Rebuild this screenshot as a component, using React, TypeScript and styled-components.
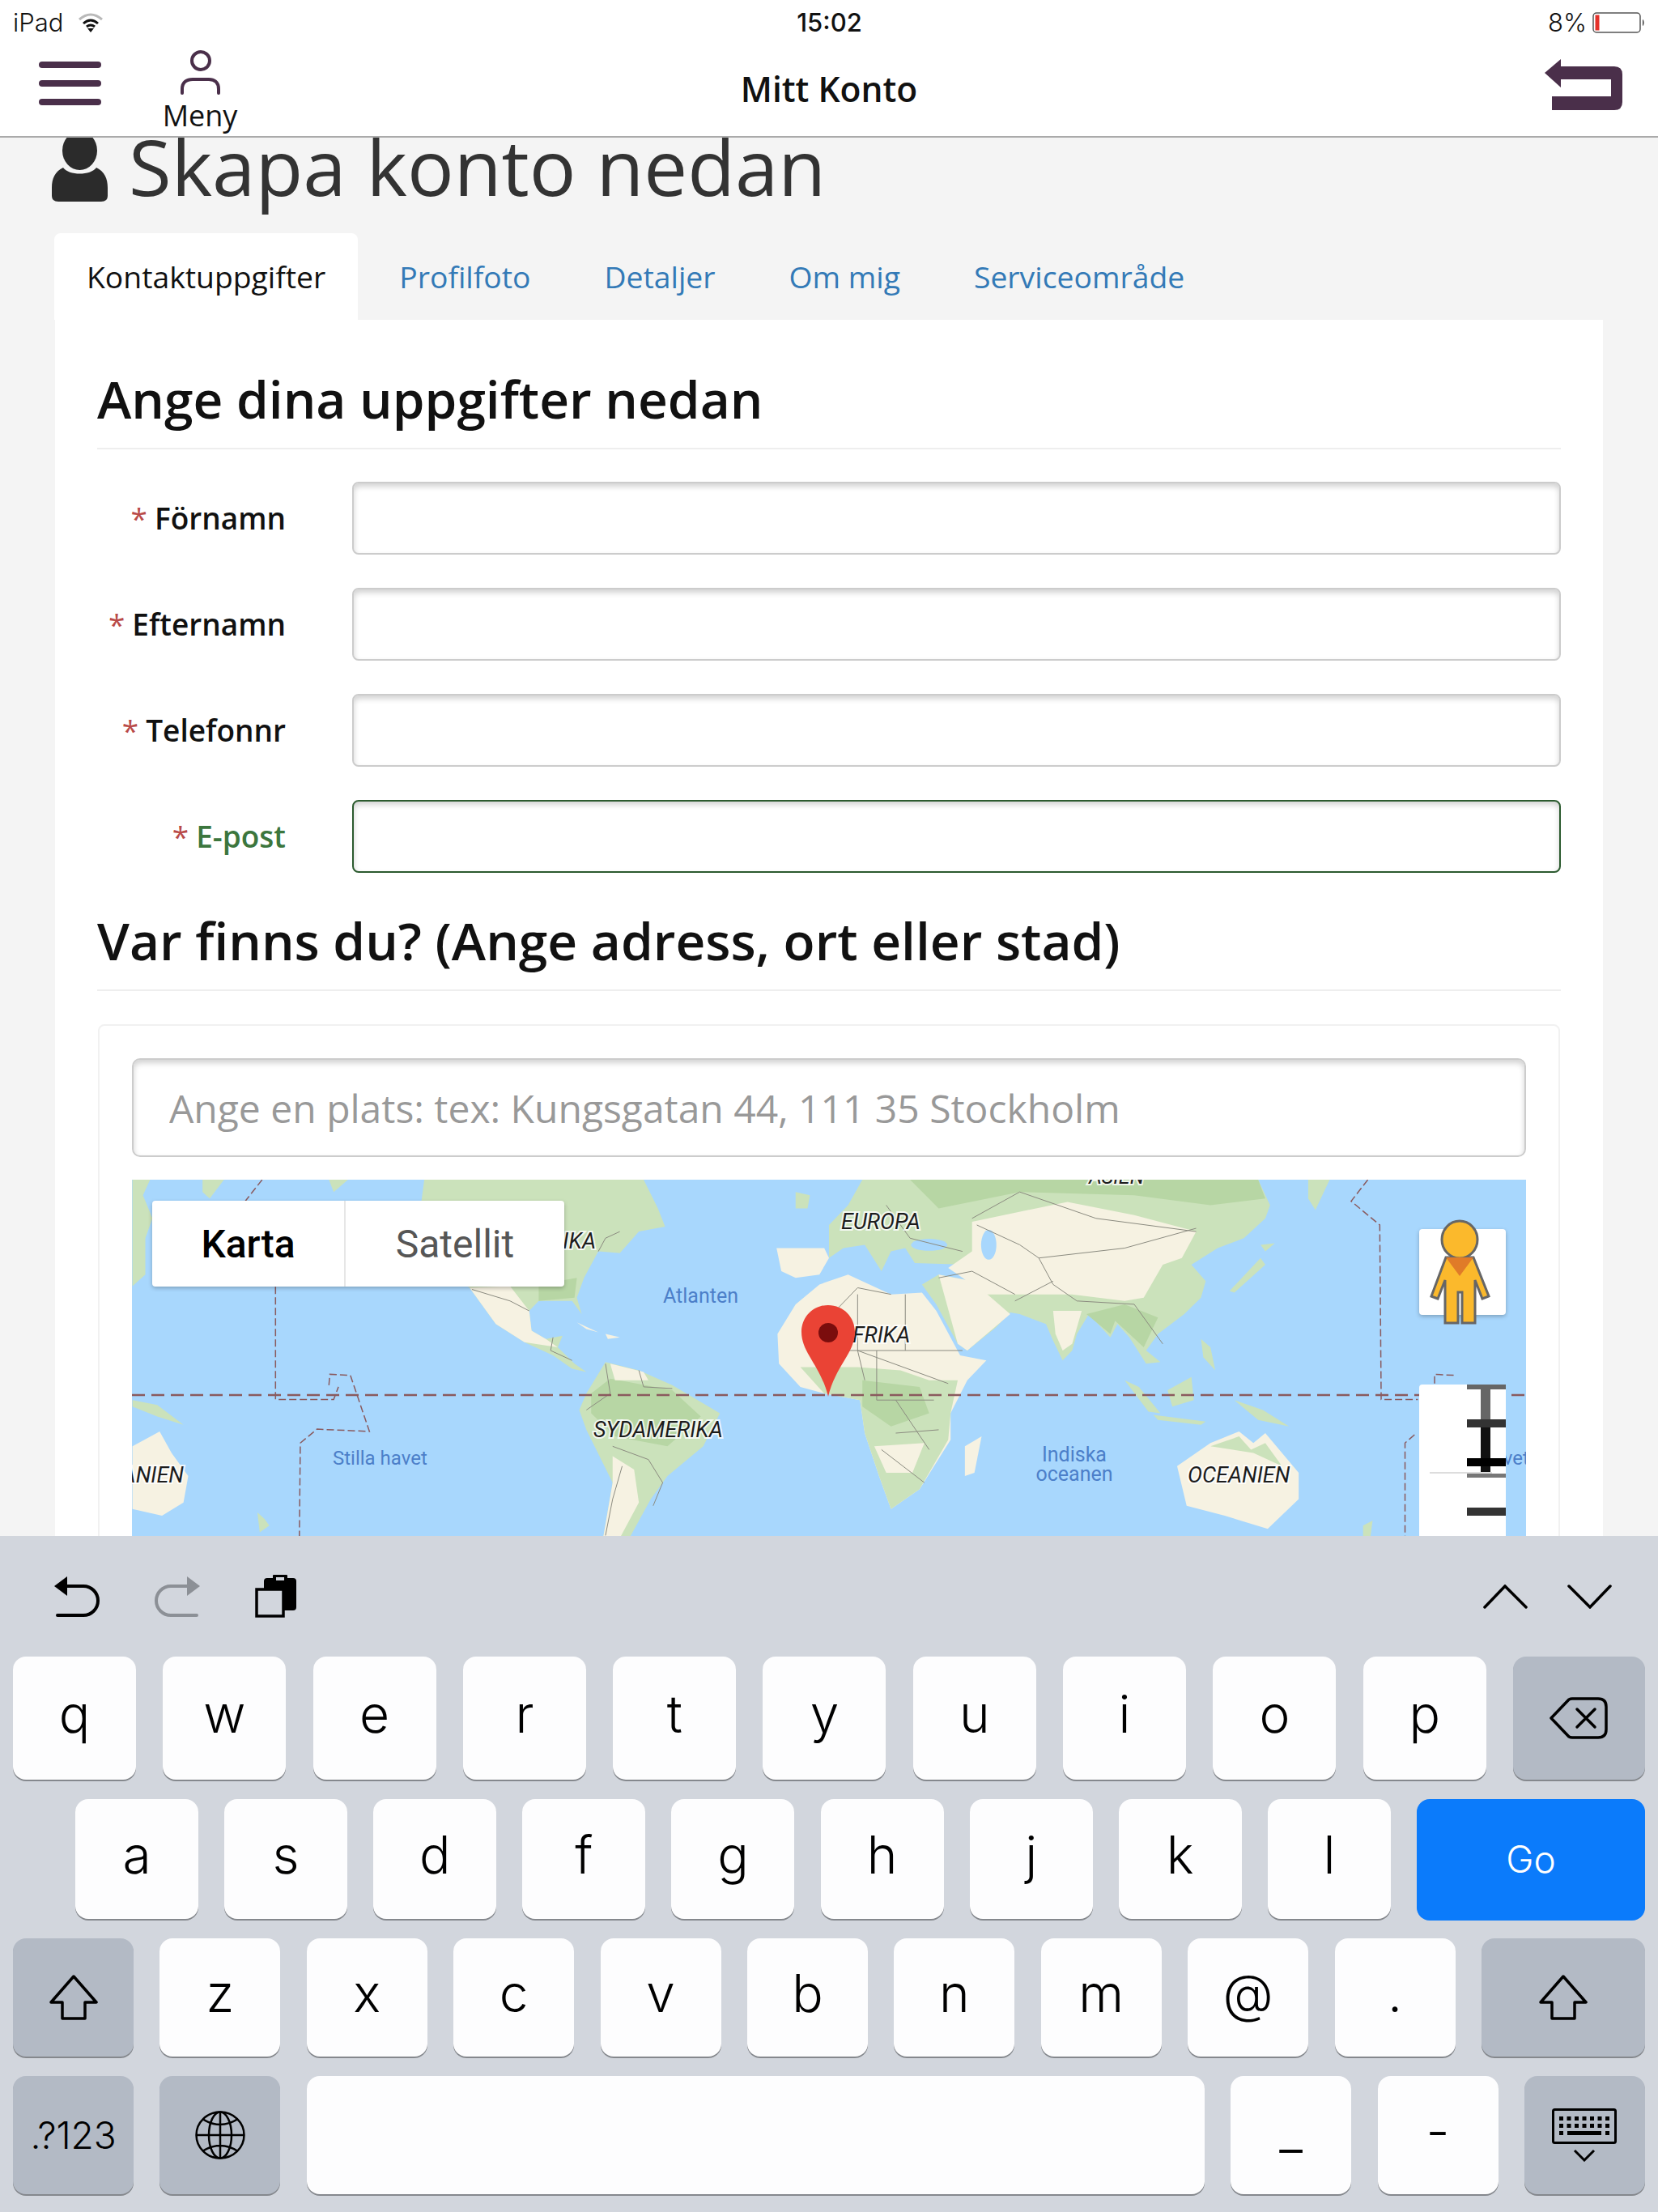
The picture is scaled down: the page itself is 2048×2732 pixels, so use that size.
import React from "react";
import styled, { createGlobalStyle } from "styled-components";

const plum = "#4a2f4a";
const kbBg = "#d2d6dd";

const GlobalStyle = createGlobalStyle`
    html, body {
        margin: 0;
        padding: 0;
        background: #fff;
    }
    * {
        box-sizing: border-box;
    }
`;

const Page = styled.div`
    width: 2048px;
    height: 2732px;
    display: flex;
    flex-direction: column;
    overflow: hidden;
    font-family: "Open Sans", sans-serif;
    background: #f4f4f4;
`;

const StatusBar = styled.div`
    height: 55px;
    background: #fff;
    display: grid;
    grid-template-columns: 1fr auto 1fr;
    align-items: center;
    padding: 0 15px 0 16px;
    font-family: Inter, sans-serif;
    font-size: 31px;
    font-weight: 300;
    color: #111;
`;

const StatusLeft = styled.div`
    display: flex;
    align-items: center;
    gap: 18px;
`;

const StatusRight = styled.div`
    display: flex;
    align-items: center;
    justify-content: flex-end;
    gap: 7px;
`;

const Clock = styled.div`
    font-weight: 500;
    font-size: 31px;
`;

const Nav = styled.div`
    height: 115px;
    background: #fff;
    border-bottom: 2px solid #aaa;
    display: grid;
    grid-template-columns: 1fr auto 1fr;
`;

const NavLeft = styled.div`
    display: flex;
    padding-left: 48px;
    gap: 76px;
`;

const Burger = styled.div`
    width: 77px;
    margin-top: 21px;
    display: flex;
    flex-direction: column;
    gap: 15px;
`;

const BurgerBar = styled.span`
    height: 8px;
    border-radius: 4px;
    background: ${plum};
`;

const MenuButton = styled.div`
    width: 92px;
    padding-top: 7px;
    display: flex;
    flex-direction: column;
    align-items: center;
`;

const MenuLabel = styled.div`
    font-size: 36px;
    line-height: 36px;
    margin-top: 8px;
    color: #111;
`;

const NavTitle = styled.div`
    font-size: 42.5px;
    font-weight: 600;
    line-height: 110px;
    color: #111;
`;

const NavRight = styled.div`
    display: flex;
    justify-content: flex-end;
    padding: 18px 44px 0 0;
`;

const Content = styled.div`
    flex: 1;
    min-height: 0;
    overflow: hidden;
    padding: 0 68px;
`;

const PageTitle = styled.h1`
    margin: -3px 0 38px -4px;
    display: flex;
    gap: 26px;
    font-size: 96px;
    line-height: 76px;
    font-weight: 400;
    color: #333;
`;

const TitleIcon = styled.svg`
    flex: none;
    margin-top: 3px;
`;

const Tabs = styled.div`
    display: flex;
    height: 107px;
    margin-left: -1px;
    gap: 11px;
`;

const Tab = styled.div<{ $active?: boolean }>`
    padding: 0 40px;
    font-size: 37.3px;
    line-height: 107px;
    border-radius: 8px 8px 0 0;
    color: ${(p) => (p.$active ? "#111" : "#337ab7")};
    background: ${(p) => (p.$active ? "#fff" : "transparent")};
`;

const Panel = styled.div`
    background: #fff;
    padding: 68px 52px 0;
`;

const SectionTitle = styled.h2<{ $top?: number }>`
    margin: ${(p) => p.$top ?? 0}px 0 0;
    padding-bottom: 30px;
    border-bottom: 2px solid #eee;
    font-size: 64px;
    line-height: 60px;
    font-weight: 600;
    color: #111;
`;

const Fields = styled.div`
    margin-top: 40px;
    display: flex;
    flex-direction: column;
    gap: 41px;
`;

const Field = styled.div`
    display: flex;
    align-items: center;
    gap: 82px;
`;

const FieldLabel = styled.label<{ $ok?: boolean }>`
    width: 233px;
    flex: none;
    padding-bottom: 2px;
    text-align: right;
    font-size: 37px;
    font-weight: 600;
    color: ${(p) => (p.$ok ? "#3c763d" : "#111")};
`;

const Required = styled.span`
    color: #b94a48;
    font-weight: 400;
    margin-right: 9px;
`;

const TextInput = styled.input<{ $ok?: boolean }>`
    flex: 1;
    min-width: 0;
    height: 90px;
    border: 2px solid ${(p) => (p.$ok ? "#2b5a2e" : "#ccc")};
    border-radius: 8px;
    background: #fff;
    box-shadow: inset 0 4px 7px rgba(0, 0, 0, 0.18);
    outline: none;
`;

const MapCard = styled.div`
    margin: 41px 1px 0;
    padding: 40px 40px 0;
    height: 900px;
    border: 2px solid #f1f1f1;
    border-radius: 8px;
`;

const SearchInput = styled.input`
    display: block;
    width: 100%;
    height: 122px;
    padding: 0 44px;
    border: 2px solid #ccc;
    border-radius: 10px;
    box-shadow: inset 0 4px 7px rgba(0, 0, 0, 0.18);
    font-family: "Open Sans", sans-serif;
    font-size: 48px;
    outline: none;
    &::placeholder {
        color: #999;
        opacity: 1;
    }
`;

const MapBox = styled.div`
    position: relative;
    margin-top: 28px;
    height: 441px;
    background: #a8d7fd;
    overflow: hidden;
`;

const MapSvg = styled.svg`
    display: block;
    polyline,
    path {
        vector-effect: non-scaling-stroke;
    }
`;

const MapLabel = styled.text<{ $water?: boolean; $size?: number }>`
    font-family: Roboto, sans-serif;
    font-size: ${(p) => p.$size ?? 27}px;
    font-style: ${(p) => (p.$water ? "normal" : "italic")};
    fill: ${(p) => (p.$water ? "#4c7fc9" : "#1c1c1c")};
    paint-order: stroke;
    stroke: ${(p) => (p.$water ? "none" : "rgba(255,255,255,0.8)")};
    stroke-width: 4px;
`;

const MapType = styled.div`
    position: absolute;
    left: 25px;
    top: 26px;
    width: 509px;
    height: 106px;
    display: flex;
    background: #fff;
    border-radius: 4px;
    box-shadow: 0 2px 5px rgba(0, 0, 0, 0.25);
    font-family: Roboto, sans-serif;
    font-size: 48px;
`;

const MapTypeItem = styled.div<{ $active?: boolean }>`
    flex: ${(p) => (p.$active ? "0 0 239px" : "1")};
    display: flex;
    align-items: center;
    justify-content: center;
    font-weight: ${(p) => (p.$active ? 500 : 400)};
    color: ${(p) => (p.$active ? "#000" : "#565656")};
    border-right: ${(p) => (p.$active ? "2px solid #e6e6e6" : "none")};
`;

const PegmanBox = styled.div`
    position: absolute;
    right: 25px;
    top: 61px;
    width: 107px;
    height: 106px;
    background: #fff;
    border-radius: 4px;
    box-shadow: 0 2px 5px rgba(0, 0, 0, 0.25);
`;

const PegmanIcon = styled.svg`
    position: absolute;
    left: 13px;
    top: -12px;
`;

const ZoomBox = styled.div`
    position: absolute;
    right: 25px;
    top: 253px;
    width: 107px;
    height: 188px;
    background: #fff;
    border-radius: 4px 4px 0 0;
`;

const Pin = styled.svg`
    position: absolute;
    left: 825px;
    top: 154px;
`;

const Keyboard = styled.div`
    flex: none;
    height: 835px;
    background: ${kbBg};
    display: flex;
    flex-direction: column;
    gap: 22px;
    font-family: Inter, sans-serif;
    font-weight: 300;
    color: #000;
`;

const KbToolbar = styled.div`
    height: 127px;
    flex: none;
    display: flex;
    align-items: center;
    justify-content: space-between;
    padding: 22px 57px 0 67px;
`;

const ToolGroup = styled.div<{ $gap: number }>`
    display: flex;
    align-items: center;
    gap: ${(p) => p.$gap}px;
`;

const KeyRow = styled.div<{ $height: number; $left?: number }>`
    height: ${(p) => p.$height}px;
    flex: none;
    display: flex;
    justify-content: space-between;
    padding: 0 16px 0 ${(p) => p.$left ?? 16}px;
`;

const Key = styled.div<{ $w: number; $kind?: "dark" | "go"; $size?: number }>`
    width: ${(p) => p.$w}px;
    height: calc(100% - 2px);
    flex: none;
    display: flex;
    align-items: center;
    justify-content: center;
    padding-bottom: 10px;
    border-radius: 16px;
    font-size: ${(p) => p.$size ?? 64}px;
    line-height: 1;
    color: ${(p) => (p.$kind === "go" ? "#fff" : "#000")};
    background: ${(p) =>
        p.$kind === "dark" ? "#b3bac5" : p.$kind === "go" ? "#0b7bfb" : "#fdfdfe"};
    box-shadow: 0 2px 0 ${(p) => (p.$kind === "go" ? "#0b7bfb" : "#85888d")};
`;

const IconKey = styled(Key)`
    padding-bottom: 0;
`;

const WifiIcon = () => (
    <svg width="32" height="24" viewBox="0 0 32 24" fill="none" strokeWidth="3">
        <path d="M2 8Q16 -4 30 8" stroke="#b9b9b9" />
        <path d="M7 13Q16 5 25 13" stroke="#111" />
        <path d="M11 17Q16 13 21 17" stroke="#111" />
        <path d="M12 19H20L16 24Z" fill="#111" />
    </svg>
);

const BatteryIcon = () => (
    <svg width="66" height="26" viewBox="0 0 66 26">
        <rect x="1" y="1" width="58" height="24" rx="4" fill="#fff" stroke="#555" strokeWidth="1.5" />
        <rect x="3.5" y="3.5" width="5" height="19" fill="#e5312a" />
        <path d="M62 9C64 10 64 16 62 17Z" fill="#333" />
    </svg>
);

const PersonIcon = () => (
    <svg width="51" height="55" viewBox="0 0 51 55" fill="none" stroke={plum} strokeWidth="4" strokeLinecap="round">
        <circle cx="26" cy="13" r="11" />
        <path d="M3 53V48C3 39 9 36 16 36H36C42 36 48 39 48 48V53" />
    </svg>
);

const BackIcon = () => (
    <svg width="96" height="64" viewBox="0 0 96 64">
        <path
            fill={plum}
            d="M20 0L0 17L20 35V25H82V46H9V63H86Q96 63 96 53V19Q96 9 86 9H20Z"
        />
    </svg>
);

const UserGlyph = () => (
    <TitleIcon width="69" height="80" viewBox="0 0 69 80" fill="#2b2b2b">
        <ellipse cx="34.5" cy="16" rx="21.5" ry="24" />
        <path d="M14 37C4 42 0 50 0 62V72Q0 79 8 79H61Q69 79 69 72V62C69 50 65 42 55 37C48 47 21 47 14 37Z" />
    </TitleIcon>
);

const land = "#f6f2e2";
const green = "#cbe2bb";
const forest = "#b7d6a4";
const borderColor = "#8b8b80";
const dashColor = "#8a5a5e";

const WorldMap = () => (
    <MapSvg width="1722" height="441" viewBox="163 1457 1722 441">
        <g transform="translate(100 1260) scale(0.589 0.408)">
            <g fill={green}>
                <path d="M108 483H145L130 530L150 600L135 660L135 770L108 805Z" />
                <path d="M255 483H300L270 540L255 520Z" />
                <path d="M520 483H560L530 520Z" />
                <path d="M720 483L1180 483L1210 570L1225 625L1170 640L1130 705L1085 700L1055 780L1040 840L1050 890L1030 850L960 850L940 880L945 940L975 965L1010 955L1000 990L1035 1040L1060 1065L1030 1055L990 1015L930 975L870 920L815 810L700 700Z" />
                <path d="M1060 1130L1100 1035L1170 1060L1240 1105L1340 1190L1305 1290L1230 1380L1195 1450L1150 1568H1095L1115 1400L1060 1240L1045 1180Z" />
                <path d="M108 1150L160 1165L215 1225L160 1200L108 1170Z" />
                <path d="M370 1490L385 1510L395 1530L375 1550Z" />
            </g>
            <g fill={forest}>
                <path d="M960 800L1040 780L1035 840L960 850Z" />
                <path d="M1070 1130L1110 1085L1240 1120L1300 1200L1230 1290L1120 1260L1070 1190Z" />
            </g>
            <g fill={land}>
                <path d="M815 810L900 805L940 880L945 940L975 965L1000 990L930 975L870 920Z" />
                <path d="M1115 1320L1160 1360L1170 1460L1130 1568H1095L1115 1400Z" />
                <path d="M1110 1040L1180 1065L1190 1090L1120 1090Z" />
                <path d="M108 1290L165 1245L190 1310L225 1380L215 1460L170 1500L108 1480Z" />
                <path d="M1040 915L1085 945L1060 935Z" />
                <path d="M1100 950L1130 960L1105 965Z" />
            </g>
            <g fill="none" stroke={borderColor} strokeWidth="1">
                <polyline points="820,815 900,850 940,880" />
                <polyline points="990,960 985,1000 1030,1030" />
                <polyline points="1100,1040 1110,1130 1060,1180" />
                <polyline points="1170,1060 1180,1110 1240,1115" />
                <polyline points="1115,1290 1190,1330 1220,1400 1200,1470" />
                <polyline points="1135,1350 1115,1450 1100,1560" />
                <polyline points="1130,640 1100,660 1085,700" />
            </g>
            <g fill="none" stroke={dashColor} strokeWidth="1.5" strokeDasharray="9 4">
                <polyline points="380,483 345,547" />
                <polyline points="408,807 408,1148 530,1148 540,1110" />
                <polyline points="520,1105 522,1072 565,1075 605,1245 495,1238 460,1280 458,1568" />
            </g>
        </g>
        <g transform="translate(1024 1260) scale(0.589 0.408)">
            <g fill={green}>
                <path d="M70 483H900L925 560L915 600L870 660L815 690L760 740L790 790L780 840L745 890L690 950L665 1000L695 1035L665 1040L630 960L605 920L590 960L545 890L520 950L510 1000L490 1030L470 970L455 920L400 890L380 885L350 930L290 1000L270 980L225 860L195 800L230 770L300 790L290 740L180 735L160 690L130 700L110 760L75 680L30 690L0 720V620L40 560Z" />
                <path d="M1005 483H1050L1020 575L1005 540Z" />
                <path d="M-70 520L-40 530L-45 570L-70 570Z" />
                <path d="M840 820L905 720L915 740L850 825Z" />
                <path d="M905 680L935 675L915 700Z" />
                <path d="M620 1090L650 1110L695 1190L670 1185Z" />
                <path d="M710 1120L760 1080L765 1150L720 1170Z" />
                <path d="M680 1195L790 1215L780 1225L690 1210Z" />
                <path d="M780 965L800 990L810 1060L785 1020Z" />
                <path d="M850 1150L910 1180L965 1230L900 1210Z" />
                <path d="M1120 1530L1140 1515L1135 1568H1120Z" />
            </g>
            <g fill={forest}>
                <path d="M170 483H900L915 540L800 560L640 530L400 520L230 570Z" />
                <path d="M540 890L620 860L690 900L660 990L630 950L600 910L590 950Z" />
            </g>
            <g fill={land}>
                <path d="M300 610L500 550L640 590L770 640L740 720L700 740L660 840L620 850L510 830L420 830L330 830L250 750L300 700Z" />
                <path d="M230 770L300 790L380 890L290 1000L270 980Z" />
                <path d="M470 880L530 880L510 980L490 1000L475 950Z" />
                <path d="M-110 690H-10L0 720L-20 770L-70 780L-100 760Z" />
                <path d="M-108 950L-70 860L-20 800L40 770L130 830L195 825L225 880L275 1015L330 1030L290 1090L255 1190L255 1270L190 1420L130 1480L105 1380L75 1250L65 1150L-10 1130L-60 1110L-105 1040Z" />
                <path d="M285 1290L320 1260L305 1370L285 1380Z" />
                <path d="M730 1350L800 1280L860 1245L890 1280L915 1250L985 1370L985 1450L920 1540L830 1500L750 1470Z" />
            </g>
            <g fill={green}>
                <path d="M-60 1050L60 1050L150 1060L210 1090L270 1090L255 1190L250 1270L190 1420L130 1480L105 1380L75 1250L65 1150L-10 1130Z" />
                <path d="M800 1290L860 1260L885 1300L915 1280L950 1350L890 1310Z" />
            </g>
            <g fill={land}>
                <path d="M95 1290L200 1280L175 1370L120 1370Z" />
            </g>
            <g fill={forest}>
                <path d="M70 1090L190 1110L210 1190L130 1230L70 1170Z" />
            </g>
            <g fill="#a8d7fd">
                <ellipse cx="335" cy="680" rx="16" ry="45" />
                <ellipse cx="210" cy="680" rx="38" ry="18" />
            </g>
            <g fill="none" stroke={borderColor} strokeWidth="1">
                <polyline points="0,900 60,810 130,830" />
                <polyline points="60,830 60,1000" />
                <polyline points="160,830 160,1000" />
                <polyline points="-30,1000 280,1000" />
                <polyline points="100,1000 100,1150 130,1150 220,1150" />
                <polyline points="140,1250 230,1240" />
                <polyline points="110,1300 200,1400" />
                <polyline points="300,600 400,520 560,600 770,640" />
                <polyline points="440,720 620,690 770,630" />
                <polyline points="310,620 400,680 440,720 470,800 520,850 640,860 700,980" />
                <polyline points="390,850 470,790" />
                <polyline points="230,780 300,760 390,830" />
                <polyline points="120,560 170,660 280,700" />
                <polyline points="75,1090 60,1000 250,1100" />
                <polyline points="140,1150 210,1300" />
            </g>
            <g fill="none" stroke={dashColor} strokeWidth="1.5" strokeDasharray="9 4">
                <polyline points="1130,483 1095,548 1155,620 1158,1148 1235,1148" />
                <polyline points="1270,1100 1270,1072 1310,1075" />
                <polyline points="1228,1255 1208,1280 1208,1568" />
            </g>
        </g>
        <polyline
            points="163,1723 1885,1723"
            fill="none"
            stroke={dashColor}
            strokeWidth="2.5"
            strokeDasharray="16 8"
        />
        <MapLabel x="1379" y="1462" textAnchor="middle" $size={25}>ASIEN</MapLabel>
        <MapLabel x="1039" y="1518">EUROPA</MapLabel>
        <MapLabel x="1036" y="1658">AFRIKA</MapLabel>
        <MapLabel x="736" y="1542" textAnchor="end">NORDAMERIKA</MapLabel>
        <MapLabel x="733" y="1775">SYDAMERIKA</MapLabel>
        <MapLabel x="227" y="1831" textAnchor="end">OCEANIEN</MapLabel>
        <MapLabel x="1467" y="1831">OCEANIEN</MapLabel>
        <MapLabel x="819" y="1609" $water $size={25}>Atlanten</MapLabel>
        <MapLabel x="411" y="1809" $water $size={24}>Stilla havet</MapLabel>
        <MapLabel x="1772" y="1809" $water $size={24}>Stilla havet</MapLabel>
        <MapLabel x="1327" y="1805" textAnchor="middle" $water $size={25}>Indiska</MapLabel>
        <MapLabel x="1327" y="1829" textAnchor="middle" $water $size={25}>oceanen</MapLabel>
    </MapSvg>
);

const PinIcon = () => (
    <Pin width="70" height="116" viewBox="0 0 70 116">
        <path
            fill="#ea4335"
            d="M35 1C16 1 2 16 2 34C2 60 26 76 35 114C44 76 68 60 68 34C68 16 54 1 35 1Z"
        />
        <circle cx="35" cy="35" r="12" fill="#7b0d0d" />
    </Pin>
);

const PegmanGlyph = () => (
    <PegmanIcon width="75" height="131" viewBox="0 0 75 131">
        <path
            fill="#fbb92c"
            stroke="#666"
            strokeWidth="3"
            d="M20 47H54L73 95L65 98L56 75V128H40V90H35V128H19V75L10 98L2 95Z"
        />
        <ellipse cx="37" cy="25" rx="22" ry="23" fill="#fbb92c" stroke="#666" strokeWidth="3" />
        <path fill="#e07b28" d="M20 47H54L37 70Z" />
    </PegmanIcon>
);

const ZoomGlyph = () => (
    <svg width="107" height="188" viewBox="0 0 107 188">
        <rect x="59" y="0" width="48" height="6" fill="#666" />
        <rect x="76" y="6" width="12" height="40" fill="#666" />
        <rect x="76" y="43" width="12" height="48" fill="#333" />
        <rect x="59" y="43" width="48" height="10" fill="#333" />
        <rect x="76" y="53" width="12" height="57" fill="#111" />
        <rect x="59" y="91" width="48" height="10" fill="#000" />
        <rect x="13" y="108" width="77" height="2" fill="#ddd" />
        <rect x="59" y="110" width="48" height="5" fill="#777" />
        <rect x="59" y="152" width="48" height="10" fill="#333" />
    </svg>
);

const UndoIcon = ({ color, flip }: { color: string; flip?: boolean }) => (
    <svg width="56" height="51" viewBox="0 0 56 51" fill="none">
        <g transform={flip ? "translate(56 0) scale(-1 1)" : undefined}>
            <path d="M0 13L16 1V25Z" fill={color} />
            <path d="M14 13H36A18 18 0 0 1 36 49H4" stroke={color} strokeWidth="4" strokeLinecap="round" />
        </g>
    </svg>
);

const ClipboardIcon = () => (
    <svg width="51" height="53" viewBox="0 0 51 53">
        <rect x="11" y="4" width="40" height="40" rx="4" fill="#000" />
        <rect x="22" y="0" width="18" height="9" rx="1" fill="#000" />
        <rect x="26" y="3" width="10" height="4" fill={kbBg} />
        <rect x="2" y="18" width="33" height="33" fill={kbBg} stroke="#000" strokeWidth="3.5" />
    </svg>
);

const ChevronIcon = ({ up }: { up?: boolean }) => (
    <svg width="55" height="30" viewBox="0 0 55 30" fill="none" stroke="#000" strokeWidth="3.5" strokeLinecap="round">
        <polyline points={up ? "2,28 27,2 53,28" : "2,2 28,28 53,2"} />
    </svg>
);

const BackspaceIcon = () => (
    <svg width="72" height="52" viewBox="0 0 72 52" fill="none" stroke="#000" strokeWidth="3.5" strokeLinecap="round" strokeLinejoin="round">
        <path d="M2 26L24 3Q26 2 28 2H60Q70 2 70 12V40Q70 50 60 50H28Q26 50 24 49Z" />
        <path d="M34 15L56 37M56 15L34 37" />
    </svg>
);

const ShiftIcon = () => (
    <svg width="60" height="56" viewBox="0 0 60 56" fill="none" stroke="#000" strokeWidth="3.5" strokeLinejoin="round">
        <path d="M30 2L58 34H44V54H16V34H2Z" />
    </svg>
);

const GlobeIcon = () => (
    <svg width="62" height="60" viewBox="0 0 62 60" fill="none" stroke="#000" strokeWidth="2.5">
        <ellipse cx="31" cy="30" rx="29.5" ry="28.5" />
        <ellipse cx="31" cy="30" rx="14" ry="28.5" />
        <path d="M31 1V59M2 30H60M9 10Q31 24 53 10M9 50Q31 36 53 50" />
    </svg>
);

const KeyboardIcon = () => {
    const dots: React.ReactElement[] = [];
    [0, 1].forEach((row) => {
        for (let i = 0; i < 7; i++) {
            dots.push(<rect key={`${row}-${i}`} x={9 + i * 9.5} y={10 + row * 9} width="5" height="5" />);
        }
    });
    return (
        <svg width="80" height="66" viewBox="0 0 80 66" fill="#000">
            <rect x="1.5" y="1.5" width="77" height="41" rx="2" fill="none" stroke="#000" strokeWidth="3" />
            {dots}
            <rect x="9" y="28" width="5" height="5" />
            <rect x="19" y="28" width="42" height="5" />
            <rect x="66" y="28" width="5" height="5" />
            <polyline points="28,52 40,64 52,52" fill="none" stroke="#000" strokeWidth="3" />
        </svg>
    );
};

const tabs = ["Kontaktuppgifter", "Profilfoto", "Detaljer", "Om mig", "Serviceområde"];
const fields = ["Förnamn", "Efternamn", "Telefonnr", "E-post"];

const App: React.FC = () => {
    return (
        <Page>
            <GlobalStyle />
            <StatusBar>
                <StatusLeft>
                    iPad
                    <WifiIcon />
                </StatusLeft>
                <Clock>15:02</Clock>
                <StatusRight>
                    8%
                    <BatteryIcon />
                </StatusRight>
            </StatusBar>
            <Nav>
                <NavLeft>
                    <Burger>
                        <BurgerBar />
                        <BurgerBar />
                        <BurgerBar />
                    </Burger>
                    <MenuButton>
                        <PersonIcon />
                        <MenuLabel>Meny</MenuLabel>
                    </MenuButton>
                </NavLeft>
                <NavTitle>Mitt Konto</NavTitle>
                <NavRight>
                    <BackIcon />
                </NavRight>
            </Nav>
            <Content>
                <PageTitle>
                    <UserGlyph />
                    Skapa konto nedan
                </PageTitle>
                <Tabs>
                    {tabs.map((t, i) => (
                        <Tab key={t} $active={i === 0}>
                            {t}
                        </Tab>
                    ))}
                </Tabs>
                <Panel>
                    <SectionTitle>Ange dina uppgifter nedan</SectionTitle>
                    <Fields>
                        {fields.map((f) => (
                            <Field key={f}>
                                <FieldLabel $ok={f === "E-post"}>
                                    <Required>*</Required>
                                    {f}
                                </FieldLabel>
                                <TextInput $ok={f === "E-post"} />
                            </Field>
                        ))}
                    </Fields>
                    <SectionTitle $top={54}>Var finns du? (Ange adress, ort eller stad)</SectionTitle>
                    <MapCard>
                        <SearchInput placeholder="Ange en plats: tex: Kungsgatan 44, 111 35 Stockholm" />
                        <MapBox>
                            <WorldMap />
                            <MapType>
                                <MapTypeItem $active>Karta</MapTypeItem>
                                <MapTypeItem>Satellit</MapTypeItem>
                            </MapType>
                            <PinIcon />
                            <PegmanBox>
                                <PegmanGlyph />
                            </PegmanBox>
                            <ZoomBox>
                                <ZoomGlyph />
                            </ZoomBox>
                        </MapBox>
                    </MapCard>
                </Panel>
            </Content>
            <Keyboard>
                <KbToolbar>
                    <ToolGroup $gap={68}>
                        <UndoIcon color="#000" />
                        <UndoIcon color="#8c9096" flip />
                        <ClipboardIcon />
                    </ToolGroup>
                    <ToolGroup $gap={49}>
                        <ChevronIcon up />
                        <ChevronIcon />
                    </ToolGroup>
                </KbToolbar>
                <KeyRow $height={154}>
                    {"qwertyuiop".split("").map((k) => (
                        <Key key={k} $w={152}>
                            {k}
                        </Key>
                    ))}
                    <IconKey $w={163} $kind="dark">
                        <BackspaceIcon />
                    </IconKey>
                </KeyRow>
                <KeyRow $height={150} $left={93}>
                    {"asdfghjkl".split("").map((k) => (
                        <Key key={k} $w={152}>
                            {k}
                        </Key>
                    ))}
                    <IconKey $w={282} $kind="go" $size={46}>
                        Go
                    </IconKey>
                </KeyRow>
                <KeyRow $height={148}>
                    <IconKey $w={149} $kind="dark">
                        <ShiftIcon />
                    </IconKey>
                    {["z", "x", "c", "v", "b", "n", "m", "@", "."].map((k) => (
                        <Key key={k} $w={149}>
                            {k}
                        </Key>
                    ))}
                    <IconKey $w={202} $kind="dark">
                        <ShiftIcon />
                    </IconKey>
                </KeyRow>
                <KeyRow $height={148}>
                    <IconKey $w={149} $kind="dark" $size={46}>
                        .?123
                    </IconKey>
                    <IconKey $w={149} $kind="dark">
                        <GlobeIcon />
                    </IconKey>
                    <Key $w={1109} />
                    <Key $w={149}>_</Key>
                    <Key $w={149}>-</Key>
                    <IconKey $w={149} $kind="dark">
                        <KeyboardIcon />
                    </IconKey>
                </KeyRow>
            </Keyboard>
        </Page>
    );
};

export default App;
